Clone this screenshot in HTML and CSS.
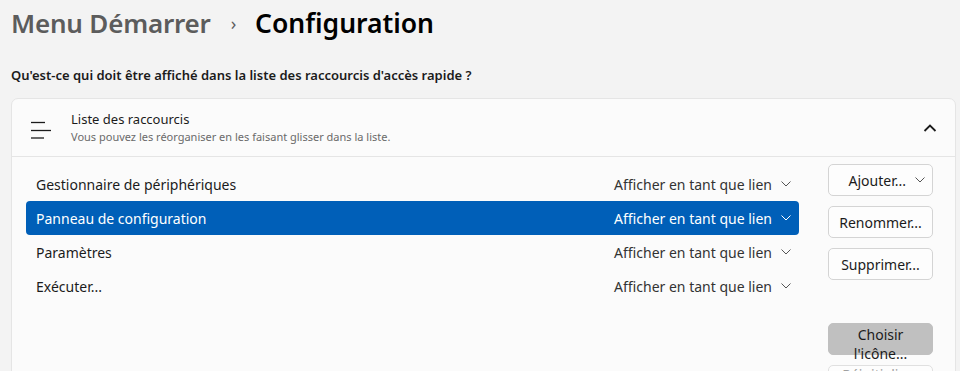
FILE: index.html
```html
<!DOCTYPE html>
<html>
<head>
    <title>Menu Démarrer - Configuration</title>
    <link rel="stylesheet" href="styles.css">
</head>
<body>
    <div class="page-title">
        <span class="crumb">Menu Démarrer</span>
        <span class="crumb-sep">›</span>
        <span class="crumb-current">Configuration</span>
    </div>
    <p class="question">Qu'est-ce qui doit être affiché dans la liste des raccourcis d'accès rapide ?</p>
    <div class="card">
        <div class="card-header">
            <svg class="list-icon" width="22" height="20" viewBox="0 0 22 20">
                <line x1="1" y1="3.5" x2="15" y2="3.5" />
                <line x1="1" y1="11.5" x2="21" y2="11.5" />
                <line x1="1" y1="19" x2="14" y2="19" />
            </svg>
            <div class="header-text">
                <div class="header-title">Liste des raccourcis</div>
                <div class="header-sub">Vous pouvez les réorganiser en les faisant glisser dans la liste.</div>
            </div>
            <svg class="collapse" width="14" height="10" viewBox="0 0 14 10">
                <polyline points="1.5,8 7,2.5 12.5,8" />
            </svg>
        </div>
        <div class="card-body">
            <ul class="shortcuts">
                <li>
                    <span class="name">Gestionnaire de périphériques</span>
                    <span class="mode">Afficher en tant que lien</span>
                    <svg class="chev" width="10" height="6" viewBox="0 0 10 6"><polyline points="0.5,0.5 5,5 9.5,0.5" /></svg>
                </li>
                <li class="selected">
                    <span class="name">Panneau de configuration</span>
                    <span class="mode">Afficher en tant que lien</span>
                    <svg class="chev" width="10" height="6" viewBox="0 0 10 6"><polyline points="0.5,0.5 5,5 9.5,0.5" /></svg>
                </li>
                <li>
                    <span class="name">Paramètres</span>
                    <span class="mode">Afficher en tant que lien</span>
                    <svg class="chev" width="10" height="6" viewBox="0 0 10 6"><polyline points="0.5,0.5 5,5 9.5,0.5" /></svg>
                </li>
                <li>
                    <span class="name">Exécuter...</span>
                    <span class="mode">Afficher en tant que lien</span>
                    <svg class="chev" width="10" height="6" viewBox="0 0 10 6"><polyline points="0.5,0.5 5,5 9.5,0.5" /></svg>
                </li>
            </ul>
            <div class="actions">
                <button type="button" class="add">Ajouter...
                    <svg class="chev" width="10" height="6" viewBox="0 0 10 6"><polyline points="0.5,0.5 5,5 9.5,0.5" /></svg>
                </button>
                <button type="button">Renommer...</button>
                <button type="button">Supprimer...</button>
                <button type="button" class="disabled choose">Choisir l'icône...</button>
                <button type="button" class="reset">Réinitialiser</button>
            </div>
        </div>
    </div>
</body>
</html>
```
FILE: styles.css
```css
body {
    font-family: "Noto Sans", "Open Sans", sans-serif;
    margin: 0;
    padding: 0 4px 0 11px;
    background-color: #f3f3f3;
    color: #1b1b1b;
    overflow: hidden;
    height: 371px;
}
.page-title {
    display: flex;
    align-items: center;
    height: 46px;
    font-size: 26px;
    font-weight: 600;
    letter-spacing: -0.2px;
}
.crumb {
    color: #5c5c5c;
}
.crumb-sep {
    color: #5c5c5c;
    font-size: 18px;
    font-weight: 400;
    margin: 0 19px 0 20px;
}
.crumb-current {
    color: #000;
    font-size: 26.5px;
    letter-spacing: 0;
}
.question {
    margin: 19px 0 0;
    font-size: 13px;
    font-weight: 600;
    line-height: 20px;
}
.card {
    margin-top: 13px;
    background-color: #fbfbfb;
    border: 1px solid #e5e5e5;
    border-radius: 7px;
}
.card-header {
    display: flex;
    align-items: center;
    height: 57px;
    border-bottom: 1px solid #e5e5e5;
    padding: 0 18px 0 18px;
}
.list-icon {
    stroke: #1b1b1b;
    stroke-width: 1.3;
    margin-right: 19px;
    margin-top: 2px;
}
.header-text {
    flex: 1;
}
.header-title {
    font-size: 13px;
    line-height: 18px;
}
.header-sub {
    font-size: 11px;
    line-height: 18px;
    color: #6a6a6a;
}
.collapse {
    fill: none;
    stroke: #1b1b1b;
    stroke-width: 1.8;
}
.card-body {
    display: flex;
    padding: 10px 22px 0 14px;
    height: 220px;
}
.shortcuts {
    list-style-type: none;
    margin: 0;
    padding: 0;
    flex: 1;
}
.shortcuts li {
    display: flex;
    align-items: center;
    height: 34px;
    padding: 0 8px 0 10px;
    border-radius: 4px;
    font-size: 14px;
}
.shortcuts .name {
    flex: 1;
}
.shortcuts .mode {
    color: #333;
    margin-right: 9px;
}
.chev {
    fill: none;
    stroke: #555;
    stroke-width: 1;
}
.shortcuts li.selected {
    background-color: #005fb8;
    color: white;
}
.shortcuts li.selected .mode {
    color: white;
}
.shortcuts li.selected .chev {
    stroke: white;
}
.actions {
    display: flex;
    flex-direction: column;
    width: 105px;
    margin-left: 29px;
    margin-top: -3px;
}
.actions button {
    flex-shrink: 0;
    height: 32px;
    margin-bottom: 10px;
    padding: 0;
    border: 1px solid #d4d4d4;
    border-radius: 5px;
    background-color: #fdfdfd;
    font-family: inherit;
    font-size: 14px;
    color: #1b1b1b;
}
.actions .add {
    display: flex;
    align-items: center;
    justify-content: flex-end;
    padding-right: 7px;
    gap: 9px;
}
.actions .choose {
    margin-top: 33px;
    line-height: 19px;
    padding: 1px 8px 0;
    display: flex;
    flex-direction: column;
    justify-content: flex-start;
    align-items: center;
    white-space: normal;
}
.actions .disabled {
    background-color: #c0c0c0;
    border-color: #c0c0c0;
    color: #1b1b1b;
}
.actions .reset {
    display: flex;
    flex-direction: column;
    justify-content: flex-start;
    align-items: center;
    line-height: 16px;
    padding-top: 1px;
    color: #a0a0a0;
    border-color: #e0e0e0;
}
```
